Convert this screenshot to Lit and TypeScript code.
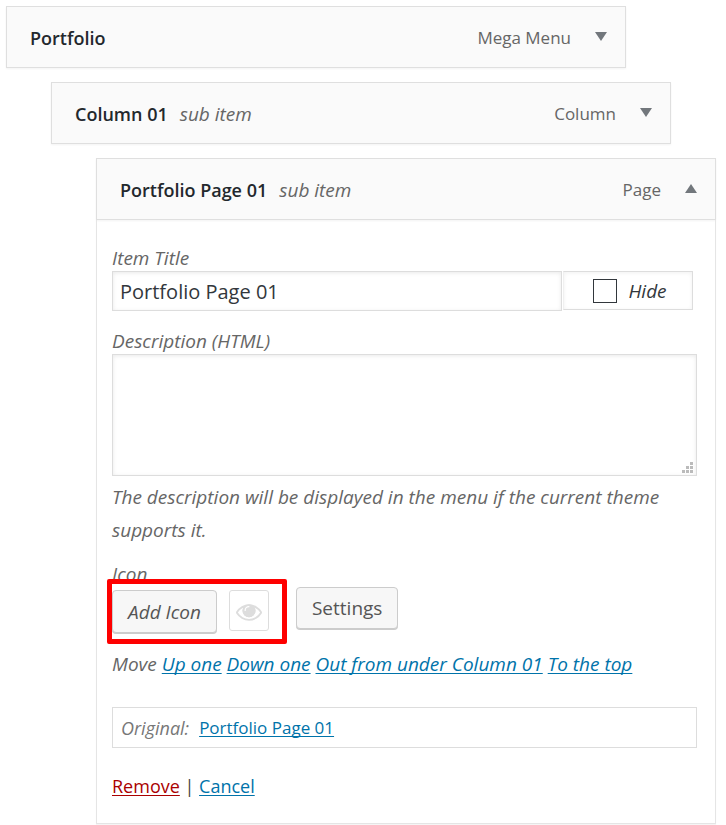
import { LitElement, html, css } from "lit";
import { customElement } from "lit/decorators.js";

@customElement("app-root")
export class AppRoot extends LitElement {
  static styles = css`
    :host {
      display: block;
      min-height: 100vh;
      box-sizing: border-box;
      padding: 6px 10px 0 6px;
      background: #fff;
      color: #666;
      font-family: "Open Sans", "Noto Sans", sans-serif;
      font-size: 19px;
      line-height: 26px;
    }
    * { box-sizing: border-box; }
    .menu {
      display: flex;
      flex-direction: column;
      gap: 14px;
      margin: 0;
      padding: 0;
      list-style: none;
    }
    .item { width: calc(100% - 90px); }
    .depth-1 { margin-left: 45px; }
    .depth-2 { margin-left: 90px; }
    .bar {
      display: flex;
      align-items: center;
      height: 62px;
      padding: 2px 18px 0 23px;
      border: 1px solid #dfdfdf;
      background: #fafafa;
      box-shadow: 0 1px 2px rgba(0, 0, 0, 0.05);
    }
    .title {
      margin: 0;
      font-size: 18px;
      font-weight: 600;
      color: #23282d;
    }
    .sub { margin-left: 12px; font-style: italic; }
    .type { margin-left: auto; font-size: 17px; }
    .toggle {
      display: flex;
      margin-left: 24px;
      padding: 0 0 4px;
      border: 0;
      background: none;
      color: #72777c;
    }
    .panel {
      padding: 25px 18px 24px 15px;
      border: 1px solid #e5e5e5;
      border-top: 0;
      box-shadow: 0 1px 1px rgba(0, 0, 0, 0.04);
    }
    .label { display: block; font-style: italic; }
    .row { display: flex; gap: 1px; padding-right: 4px; }
    .text, .area {
      display: block;
      margin: 0;
      border: 1px solid #ddd;
      border-radius: 0;
      background: #fff;
      box-shadow: inset 0 1px 4px rgba(0, 0, 0, 0.09);
      font: inherit;
      color: #32373c;
      outline: 0;
    }
    .text { flex: 1; min-width: 0; height: 40px; padding: 0 7px; font-size: 20px; }
    .hide {
      display: flex;
      align-items: center;
      justify-content: center;
      gap: 11px;
      width: 130px;
      height: 39px;
      padding-left: 4px;
      border: 1px solid #ddd;
      border-left-color: #f0f0f0;
      box-shadow: inset 0 1px 4px rgba(0, 0, 0, 0.06);
      font-style: italic;
      color: #32373c;
    }
    .tick {
      appearance: none;
      width: 24px;
      height: 24px;
      margin: 0;
      border: 1px solid #32373c;
      background: #fff;
    }
    .field { margin-top: 17px; }
    .area-wrap { position: relative; }
    .area { width: 100%; height: 122px; padding: 8px; resize: none; }
    .grip { position: absolute; right: 4px; bottom: 3px; fill: #bbb; }
    .hint { margin: 5px 0 0; line-height: 33px; font-style: italic; }
    .actions { display: flex; align-items: flex-end; gap: 27px; margin-top: 14px; }
    .icon-tools {
      position: relative;
      display: flex;
      align-items: flex-start;
      gap: 12px;
      margin-top: 3px;
    }
    .marker {
      position: absolute;
      inset: -11px -18px -11px -5px;
      border: 5px solid #fe0000;
      border-radius: 2px;
      pointer-events: none;
    }
    .button {
      height: 43px;
      padding: 0 15px;
      border: 1px solid #ccc;
      border-radius: 4px;
      background: #f7f7f7;
      box-shadow: 0 1px 0 #ccc;
      font: inherit;
      color: #555;
      white-space: nowrap;
    }
    .add { font-style: italic; }
    .settings { height: 42px; margin-bottom: 4px; }
    .eye {
      display: flex;
      align-items: center;
      justify-content: center;
      width: 40px;
      height: 41px;
      padding: 4px 0 0;
      border: 1px solid #ddd;
      border-radius: 3px;
      background: #fff;
      color: #ddd;
    }
    .move { margin: 15px 0 0; line-height: 33px; font-style: italic; }
    a {
      color: #0073aa;
      text-decoration: underline 1px;
      text-underline-offset: 2px;
      text-decoration-skip-ink: none;
    }
    .original {
      display: flex;
      align-items: center;
      gap: 10px;
      height: 41px;
      margin: 26px 0 0;
      padding: 0 8px;
      border: 1px solid #ddd;
      font-size: 17px;
    }
    .original em { font-size: 18px; color: #777; }
    .foot { margin: 25px 0 0; font-size: 18px; color: #444; }
    .remove { color: #a00; }
  `;

  private arrow(up: boolean) {
    return html`<svg width="12" height="9" viewBox="0 0 12 9" fill="currentColor" aria-hidden="true">
      <path d=${up ? "M0 9 6 0l6 9z" : "M0 0h12L6 9z"} />
    </svg>`;
  }

  private bar(title: string, type: string, sub: boolean, open: boolean) {
    return html`<div class="bar">
      <h3 class="title">${title}</h3>
      ${sub ? html`<span class="sub">sub item</span>` : null}
      <span class="type">${type}</span>
      <button class="toggle" type="button" aria-label="Toggle ${title}" aria-expanded=${open ? "true" : "false"}>
        ${this.arrow(open)}
      </button>
    </div>`;
  }

  render() {
    return html`<ul class="menu">
      <li class="item">${this.bar("Portfolio", "Mega Menu", false, false)}</li>
      <li class="item depth-1">${this.bar("Column 01", "Column", true, false)}</li>
      <li class="item depth-2">
        ${this.bar("Portfolio Page 01", "Page", true, true)}
        <div class="panel">
          <label class="label" for="item-title">Item Title</label>
          <div class="row">
            <input class="text" id="item-title" type="text" value="Portfolio Page 01" />
            <label class="hide"><input class="tick" type="checkbox" />Hide</label>
          </div>
          <div class="field">
            <label class="label" for="item-description">Description (HTML)</label>
            <div class="area-wrap">
              <textarea class="area" id="item-description"></textarea>
              <svg class="grip" width="11" height="11" viewBox="0 0 11 11" aria-hidden="true">
                <path d="M8 0h3v3H8zM4 4h3v3H4zM8 4h3v3H8zM0 8h3v3H0zM4 8h3v3H4zM8 8h3v3H8z" />
              </svg>
            </div>
          </div>
          <p class="hint">The description will be displayed in the menu if the current theme supports it.</p>
          <div class="actions">
            <div>
              <span class="label">Icon</span>
              <div class="icon-tools">
                <button class="button add" type="button">Add Icon</button>
                <button class="eye" type="button" aria-label="Preview icon">
                  <svg width="26" height="17" viewBox="0 384 1792 1152" fill="currentColor" aria-hidden="true">
                    <path fill-rule="evenodd" d="M1664 960q-152-236-381-353 61 104 61 225 0 185-131.5 316.5t-316.5 131.5-316.5-131.5-131.5-316.5q0-121 61-225-229 117-381 353 133 205 333.5 326.5t434.5 121.5 434.5-121.5 333.5-326.5zm-720-384q0-20-14-34t-34-14q-125 0-214.5 89.5t-89.5 214.5q0 20 14 34t34 14 34-14 14-34q0-86 61-147t147-61q20 0 34-14t14-34zm848 384q0 34-20 69-140 230-376.5 368.5t-499.5 138.5-499.5-139-376.5-368q-20-35-20-69t20-69q140-229 376.5-368t499.5-139 499.5 139 376.5 368q20 35 20 69z" />
                    <circle cx="896" cy="832" r="448" />
                    <path d="M630 820a260 260 0 0 1 260-260" fill="none" stroke="#fff" stroke-width="84" stroke-linecap="round" />
                  </svg>
                </button>
                <div class="marker"></div>
              </div>
            </div>
            <button class="button settings" type="button">Settings</button>
          </div>
          <p class="move">
            Move <a href="#up">Up one</a> <a href="#down">Down one</a>
            <a href="#out">Out from under Column 01</a> <a href="#top">To the top</a>
          </p>
          <p class="original"><em>Original:</em><a href="#original">Portfolio Page 01</a></p>
          <p class="foot"><a class="remove" href="#remove">Remove</a> | <a href="#cancel">Cancel</a></p>
        </div>
      </li>
    </ul>`;
  }
}
